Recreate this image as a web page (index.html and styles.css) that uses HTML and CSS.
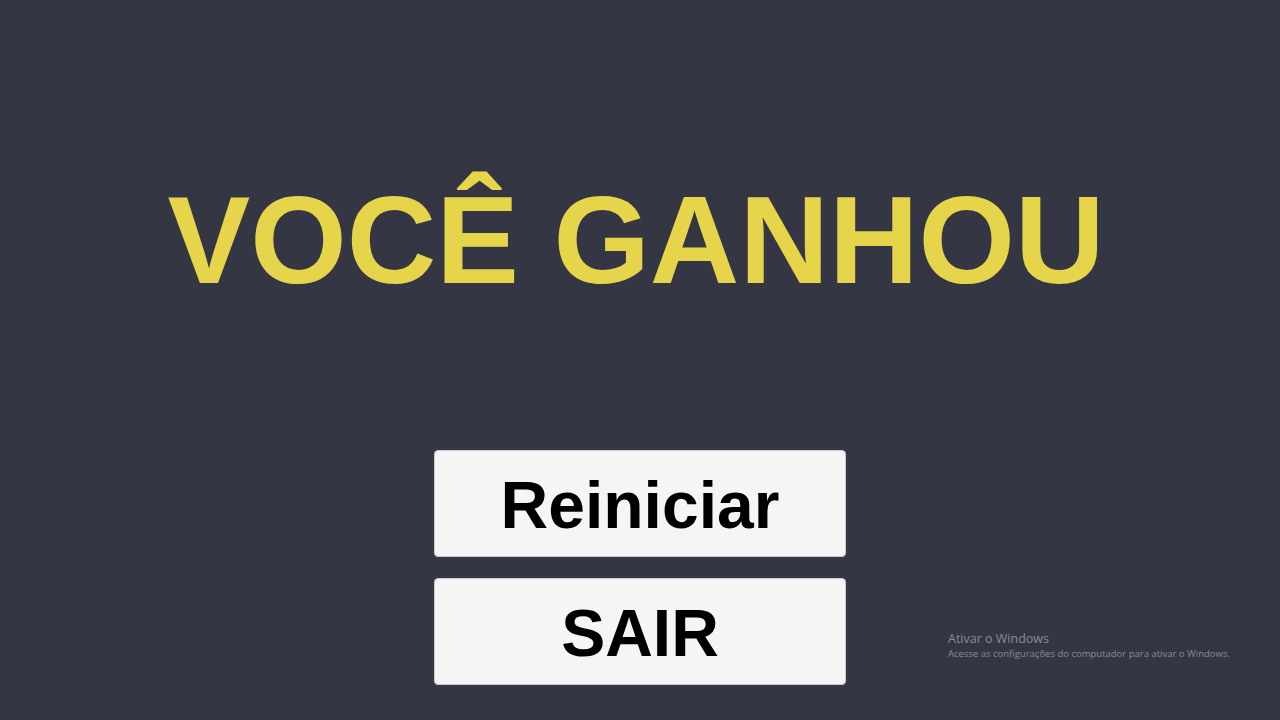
FILE: index.html
```html
<!DOCTYPE html>
<html lang="pt-BR">
<head>
<meta charset="utf-8">
<title>Você ganhou</title>
<link rel="stylesheet" href="styles.css">
</head>
<body>
<main class="screen">
  <h1 class="title">VOCÊ GANHOU</h1>
  <div class="buttons">
    <button class="btn">Reiniciar</button>
    <button class="btn">SAIR</button>
  </div>
</main>
<div class="watermark">
  <div class="wm-title">Ativar o Windows</div>
  <div class="wm-sub">Acesse as configurações do computador para ativar o Windows.</div>
</div>
</body>
</html>
```

FILE: styles.css
```css
html, body {
  margin: 0;
  padding: 0;
}
body {
  width: 1280px;
  height: 720px;
  background: #343643;
  overflow: hidden;
  position: relative;
  font-family: "Liberation Sans", Arial, sans-serif;
}
.screen {
  display: flex;
  flex-direction: column;
  align-items: center;
  padding-top: 178px;
}
.title {
  margin: 0;
  font-size: 124px;
  line-height: 1;
  font-weight: bold;
  color: #e6d54a;
  letter-spacing: 0;
  text-align: center;
  padding-right: 8px;
}
.buttons {
  margin-top: 148px;
  display: flex;
  flex-direction: column;
  gap: 21px;
}
.btn {
  width: 412px;
  height: 107px;
  box-sizing: border-box;
  background: #f5f5f5;
  border: 1px solid #c9c9cc;
  border-radius: 4px;
  font-family: "Liberation Sans", Arial, sans-serif;
  font-weight: bold;
  font-size: 66px;
  line-height: 1;
  color: #000;
  display: flex;
  align-items: center;
  justify-content: center;
  padding: 0;
  padding-top: 2px;
}
.watermark {
  position: absolute;
  left: 948px;
  top: 630px;
  color: #8a8c96;
  font-family: "Open Sans", "Noto Sans", sans-serif;
}
.wm-title {
  font-size: 12.5px;
  line-height: 17px;
}
.wm-sub {
  font-size: 9.5px;
  line-height: 13px;
}
```
